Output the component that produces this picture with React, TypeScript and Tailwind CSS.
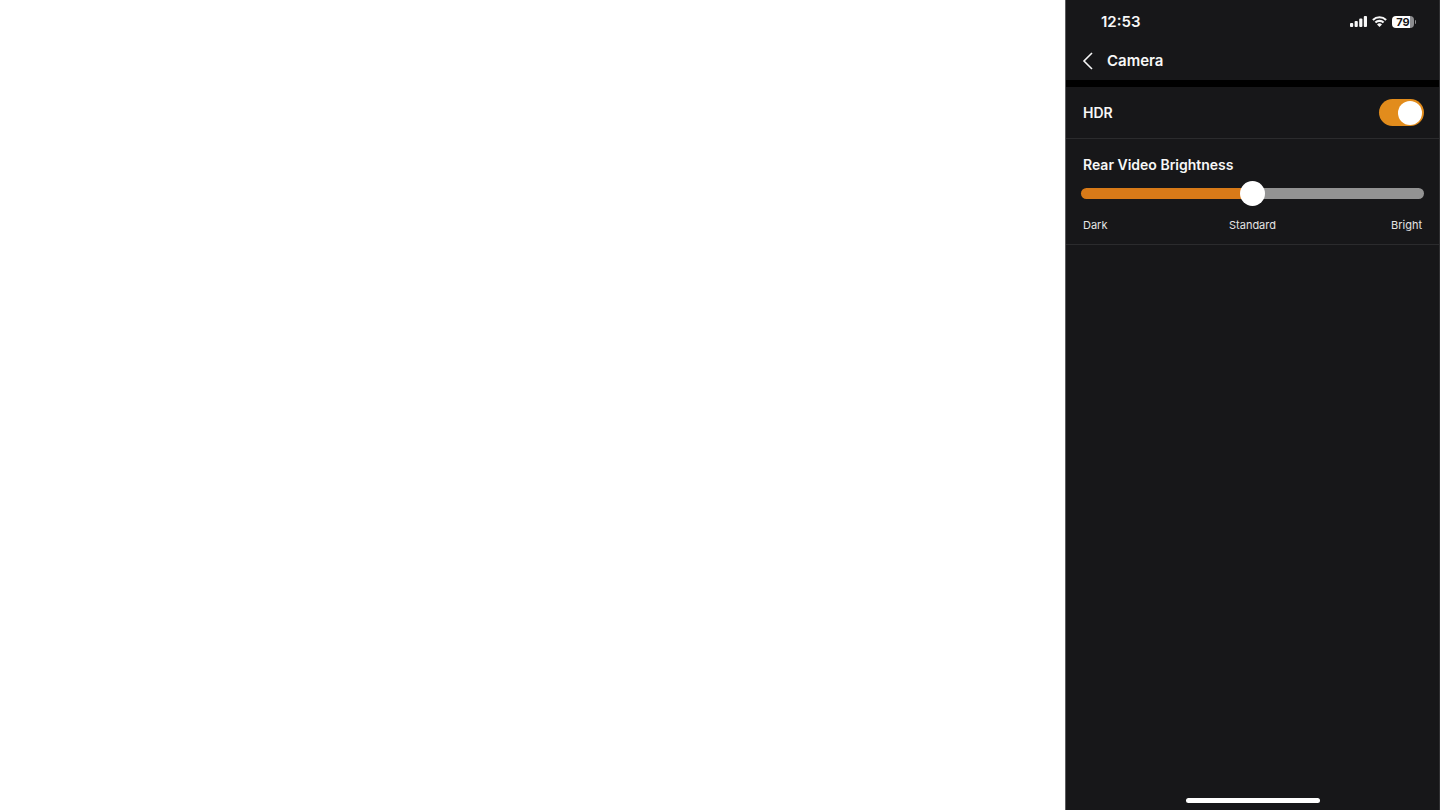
import { useState } from "react";

function StatusBar() {
  return (
    <div className="flex h-[43px] items-center justify-between pl-[35px] pr-[23px]">
      <time className="text-[15px] font-semibold leading-5">12:53</time>
      <div className="flex items-center gap-[5px]">
        <svg width="17" height="11" viewBox="0 0 17 11" fill="currentColor" role="img" aria-label="Signal">
          <rect x="0" y="7" width="3.2" height="4" rx="0.9" />
          <rect x="4.6" y="5" width="3.2" height="6" rx="0.9" />
          <rect x="9.2" y="2.5" width="3.2" height="8.5" rx="0.9" />
          <rect x="13.8" y="0" width="3.2" height="11" rx="0.9" />
        </svg>
        <svg width="15" height="11" viewBox="0 0 15 11" fill="none" stroke="currentColor" strokeWidth="2.1" role="img" aria-label="Wi-Fi">
          <path d="M0.9 3.9a9.4 9.4 0 0 1 13.2 0" />
          <path d="M3.4 6.6a5.8 5.8 0 0 1 8.2 0" />
          <path d="M7.5 11 5 8.5a3.5 3.5 0 0 1 5 0z" fill="currentColor" stroke="none" />
        </svg>
        <div className="flex items-center gap-px">
          <div className="flex h-3 w-[22px] items-center justify-center rounded-[4px] bg-linear-to-r from-white from-80% to-[#8d8d8f] to-80% text-[11px] font-bold leading-3 text-[#171719]">
            79
          </div>
          <div className="h-1 w-px rounded-r-full bg-[#8d8d8f]" />
        </div>
      </div>
    </div>
  );
}

export default function App() {
  const [hdr, setHdr] = useState(true);
  const [brightness, setBrightness] = useState(50);

  return (
    <div className="flex min-h-screen justify-end bg-white font-['Inter',sans-serif]">
      <main className="flex w-full max-w-[375px] flex-col border-x border-l-[#5c5c5e] border-r-[#303032] bg-[#171719] text-[#f7f7f7]">
        <StatusBar />
        <header className="flex h-[37px] items-center gap-[13px] pb-px pl-4">
          <button type="button" aria-label="Back" className="flex">
            <svg width="12" height="18" viewBox="0 0 12 18" fill="none" stroke="currentColor" strokeWidth="1.6">
              <path d="M10 1 2 9l8 8" />
            </svg>
          </button>
          <h1 className="text-[15px] font-semibold leading-5">Camera</h1>
        </header>
        <div className="h-[7px] bg-black" />

        <section className="flex h-[52px] items-center justify-between border-b border-[#2b2b2d] pl-[17px] pr-[15px]">
          <label htmlFor="hdr" className="text-sm font-semibold leading-5">HDR</label>
          <input
            id="hdr"
            type="checkbox"
            role="switch"
            checked={hdr}
            onChange={(e) => setHdr(e.target.checked)}
            className="flex h-[27px] w-[45px] appearance-none items-center rounded-full bg-[#909090] px-[2px] before:size-6 before:rounded-full before:bg-white checked:justify-end checked:bg-[#e28c1c]"
          />
        </section>

        <section className="border-b border-[#2b2b2d] px-[15px] pb-[11px] pt-4">
          <label htmlFor="brightness" className="block pl-[2px] text-sm font-semibold leading-5">
            Rear Video Brightness
          </label>
          <input
            id="brightness"
            type="range"
            min={0}
            max={100}
            value={brightness}
            onChange={(e) => setBrightness(Number(e.target.value))}
            style={{ backgroundImage: `linear-gradient(to right, #d87a18 ${brightness}%, #939393 ${brightness}%)` }}
            className="mb-[14px] mt-[13px] block h-[11px] w-full appearance-none rounded-full [&::-webkit-slider-thumb]:size-[25px] [&::-webkit-slider-thumb]:appearance-none [&::-webkit-slider-thumb]:rounded-full [&::-webkit-slider-thumb]:bg-white"
          />
          <div className="grid grid-cols-3 px-[2px] pt-1 text-[11px] leading-4 text-[#e4e4e4]">
            <span>Dark</span>
            <span className="text-center">Standard</span>
            <span className="text-right">Bright</span>
          </div>
        </section>

        <div className="mx-auto mb-[7px] mt-auto h-[5px] w-[134px] rounded-full bg-white" />
      </main>
    </div>
  );
}
